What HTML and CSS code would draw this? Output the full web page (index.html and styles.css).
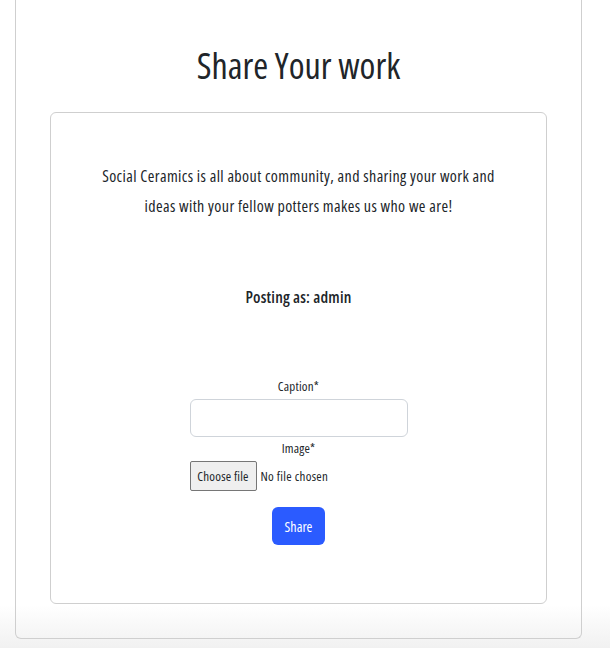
FILE: index.html
```html
<!DOCTYPE html>
<html lang="en">
<head>
<meta charset="utf-8">
<title>Share Your work</title>
<link rel="stylesheet" href="styles.css">
</head>
<body>
<main class="outer">
  <h1 class="title">Share Your work</h1>
  <section class="card">
    <p class="intro">Social Ceramics is all about community, and sharing your work and ideas with your fellow potters makes us who we are!</p>
    <p class="posting">Posting as: admin</p>
    <form class="form">
      <label class="label" for="caption">Caption*</label>
      <input class="text-input" id="caption" type="text">
      <label class="label label-image" for="image">Image*</label>
      <div class="file-row">
        <span class="file-btn">Choose file</span>
        <span class="file-name">No file chosen</span>
      </div>
      <button class="share" type="button">Share</button>
    </form>
  </section>
</main>
</body>
</html>
```
FILE: styles.css
```css
html, body {
  margin: 0;
  padding: 0;
}
body {
  width: 610px;
  height: 648px;
  overflow: hidden;
  background: linear-gradient(to bottom, #ffffff 0, #ffffff 605px, #f1f1f1 648px);
  font-family: "Open Sans", sans-serif;
  font-stretch: condensed;
  color: #212529;
}
.outer {
  box-sizing: border-box;
  margin-left: 15px;
  width: 567px;
  height: 639px;
  border: 1px solid #cfcfcf;
  border-top: 0;
  border-radius: 0 0 6px 6px;
  padding: 0 34px;
  display: flex;
  flex-direction: column;
}
.title {
  margin: 44px 0 0 0;
  height: 68px;
  text-align: center;
  font-weight: 400;
  font-size: 36px;
  line-height: 44px;
}
.card {
  box-sizing: border-box;
  width: 497px;
  height: 492px;
  border: 1px solid #cfcfcf;
  border-radius: 6px;
  background: #fff;
  display: flex;
  flex-direction: column;
  align-items: center;
  padding-top: 48px;
}
.intro {
  margin: 0;
  width: 400px;
  text-align: center;
  font-size: 16px;
  line-height: 30px;
  letter-spacing: 0.4px;
}
.posting {
  margin: 64px 0 0 0;
  font-size: 16px;
  font-weight: 600;
  line-height: 24px;
  letter-spacing: 0.2px;
}
.form {
  margin-top: 69px;
  display: flex;
  flex-direction: column;
  align-items: center;
  width: 218px;
}
.label {
  font-size: 13px;
  line-height: 16px;
  margin-bottom: 5px;
  letter-spacing: 0.2px;
}
.text-input {
  box-sizing: border-box;
  width: 218px;
  height: 38px;
  border: 1px solid #cfd4da;
  border-radius: 6px;
  margin: 0 0 3px 0;
  padding: 0;
}
.file-row {
  align-self: flex-start;
  display: flex;
  align-items: center;
  gap: 4px;
  font-size: 13px;
  letter-spacing: 0.3px;
}
.file-btn {
  box-sizing: border-box;
  height: 30px;
  width: 67px;
  display: flex;
  align-items: center;
  justify-content: center;
  background: #efefef;
  border: 1px solid #767676;
  border-radius: 2px;
  letter-spacing: 0.2px;
}
.share {
  margin-top: 16px;
  width: 53px;
  height: 38px;
  border: 0;
  border-radius: 6px;
  background: #2b5bff;
  color: #fff;
  font-family: inherit;
  font-stretch: condensed;
  font-size: 14px;
  font-weight: 500;
  padding: 0;
}
```
